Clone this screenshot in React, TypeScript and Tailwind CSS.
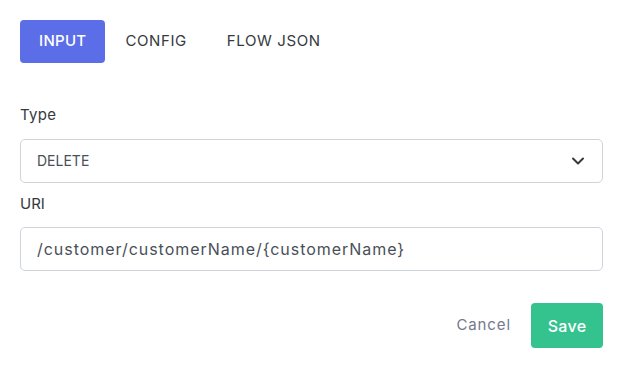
import React, { useState } from 'react';

const tabs = ['INPUT', 'CONFIG', 'FLOW JSON'];

const App: React.FC = () => {
  const [active, setActive] = useState('INPUT');
  const [type, setType] = useState('DELETE');
  const [uri, setUri] = useState('/customer/customerName/{customerName}');

  return (
    <div className="w-[623px] h-[372px] bg-white px-5 pt-5 text-[#495057]" style={{ fontFamily: 'Inter, "Noto Sans", sans-serif' }}>
      {/* Tabs */}
      <div className="flex items-center">
        {tabs.map((t) => (
          <button
            key={t}
            onClick={() => setActive(t)}
            className={
              active === t
                ? 'h-[43px] px-[19px] rounded-[4px] bg-[#5b6ee8] text-white text-[15px] font-medium tracking-[0.02em]'
                : 'h-[43px] px-5 rounded-[4px] text-[#343a40] text-[15px] font-normal tracking-[0.04em]'
            }
          >
            {t}
          </button>
        ))}
      </div>

      {/* Form */}
      <div className="mt-[41px]">
        <label className="block text-[15px] text-[#343a40] mb-[12px] tracking-[0.02em]">Type</label>
        <div className="relative">
          <select
            value={type}
            onChange={(e) => setType(e.target.value)}
            className="w-full h-[44px] appearance-none border border-[#ced4da] rounded-[5px] pl-4 pr-10 text-[14px] text-[#495057] bg-white outline-none"
          >
            <option value="GET">GET</option>
            <option value="POST">POST</option>
            <option value="PUT">PUT</option>
            <option value="DELETE">DELETE</option>
          </select>
          <svg className="absolute right-[18px] top-[17px] pointer-events-none" width="14" height="10" viewBox="0 0 14 10" fill="none">
            <path d="M2 2.5 7 7.5 12 2.5" stroke="#343a40" strokeWidth="2" strokeLinecap="round" strokeLinejoin="round" />
          </svg>
        </div>

        <label className="block text-[15px] text-[#343a40] mt-[10px] mb-[12px]">URI</label>
        <input
          value={uri}
          onChange={(e) => setUri(e.target.value)}
          className="w-full h-[44px] border border-[#ced4da] rounded-[5px] px-4 text-[16px] text-[#495057] outline-none tracking-[0.06em]"
        />
      </div>

      {/* Actions */}
      <div className="flex justify-end items-center gap-5 mt-[32px]">
        <button className="text-[15px] text-[#74788d] tracking-[0.06em]">Cancel</button>
        <button className="h-[45px] w-[72px] rounded-[4px] bg-[#34c38f] text-white text-[16px] font-medium tracking-[0.02em]">Save</button>
      </div>
    </div>
  );
};

export default App;
